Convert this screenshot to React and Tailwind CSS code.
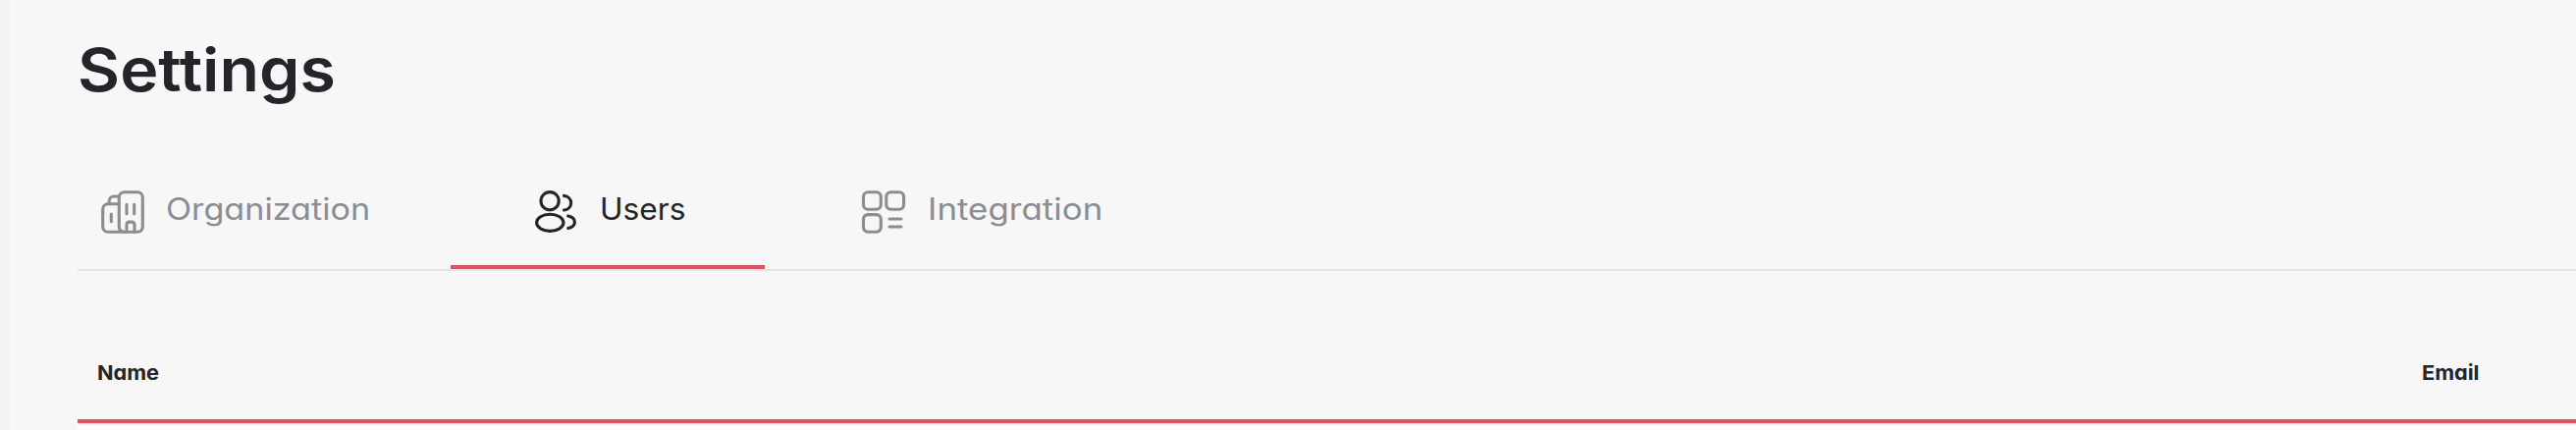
function OrganizationIcon() {
  return (
    <svg width="48" height="48" viewBox="0 0 48 48" fill="none" stroke="currentColor" strokeWidth="3.1" strokeLinecap="round" strokeLinejoin="round">
      <rect x="20.3" y="3.7" width="24" height="40.6" rx="5.2" />
      <path d="M20.3 15.7H9a5.3 5.3 0 0 0-5.3 5.3v18a5.3 5.3 0 0 0 5.3 5.3h16.5" />
      <path d="M10.2 15.5V13a5 5 0 0 1 5-5h5" />
      <path d="M12.3 26v7.7M28 16.3v9.4M35.7 16.3v9.4" />
      <path d="M28 44.3v-7.8a2.4 2.4 0 0 1 2.4-2.4h3.2a2.4 2.4 0 0 1 2.4 2.4v7.8" />
    </svg>
  );
}

function UsersIcon() {
  return (
    <svg width="48" height="48" viewBox="0 0 48 48" fill="none" stroke="currentColor" strokeWidth="3.1" strokeLinecap="round">
      <circle cx="17.1" cy="12.7" r="9.1" />
      <ellipse cx="17.3" cy="34.8" rx="13.7" ry="8.6" />
      <path d="M31.5 7.4c4.2.4 7.2 3.4 7.2 7.3s-3 6.9-7.2 7.3" />
      <path d="M35.7 28c4 .8 6.7 3.2 6.7 6.2s-2.7 5.4-6.7 6.2" />
    </svg>
  );
}

function IntegrationIcon() {
  return (
    <svg width="48" height="48" viewBox="0 0 48 48" fill="none" stroke="currentColor" strokeWidth="3.1" strokeLinecap="round">
      <rect x="3.5" y="3.7" width="17.8" height="17.6" rx="4.6" />
      <rect x="26.8" y="3.7" width="17.8" height="17.6" rx="4.6" />
      <rect x="3.5" y="26.6" width="17.8" height="17.6" rx="4.6" />
      <path d="M30 31h12M30 39h12" />
    </svg>
  );
}

export default function App() {
  return (
    <div className="flex h-[438px] w-full overflow-hidden bg-[#f7f7f7] font-['Inter','Open_Sans',sans-serif] text-[#24252b] [font-feature-settings:'cv11']">
      <aside className="w-[9px] shrink-0 bg-[#f2f2f2]" />
      <main className="flex min-w-0 flex-1 flex-col pl-[70px]">
        <h1 className="mt-[34px] h-[74px] origin-left scale-x-[1.087] text-[61px] leading-[74px] font-semibold">
          Settings
        </h1>

        <nav className="mt-[54px] flex h-[114px] shrink-0 border-b-2 border-[#e1e2e7] text-[30.5px] leading-[48px] text-[#8c8d91]">
          <button className="flex w-[380px] items-start gap-[20px] pt-[30px] pl-[22px]">
            <OrganizationIcon />
            <span className="-mt-[3px] origin-left scale-x-[1.12]">Organization</span>
          </button>
          <button className="flex w-[320px] items-start gap-[20px] border-b-4 border-[#ed4c60] pt-[30px] pl-[84px] text-[#24252b]">
            <UsersIcon />
            <span className="-mt-[3px] origin-left scale-x-[1.04]">Users</span>
          </button>
          <button className="flex items-start gap-[21px] pt-[30px] pl-[97px]">
            <IntegrationIcon />
            <span className="-mt-[3px] origin-left scale-x-[1.145]">Integration</span>
          </button>
        </nav>

        <div className="flex h-[155px] shrink-0 border-b-4 border-[#ed4c60] pt-[90px] pl-[20px] text-[20.5px] leading-[28px] font-bold">
          <span className="w-[2368px] shrink-0">
            <span className="inline-block origin-left scale-x-[1.06]">Name</span>
          </span>
          <span className="origin-left scale-x-[1.06]">Email</span>
        </div>
        <div className="flex-1 bg-[#fcfcfc]" />
      </main>
    </div>
  );
}
